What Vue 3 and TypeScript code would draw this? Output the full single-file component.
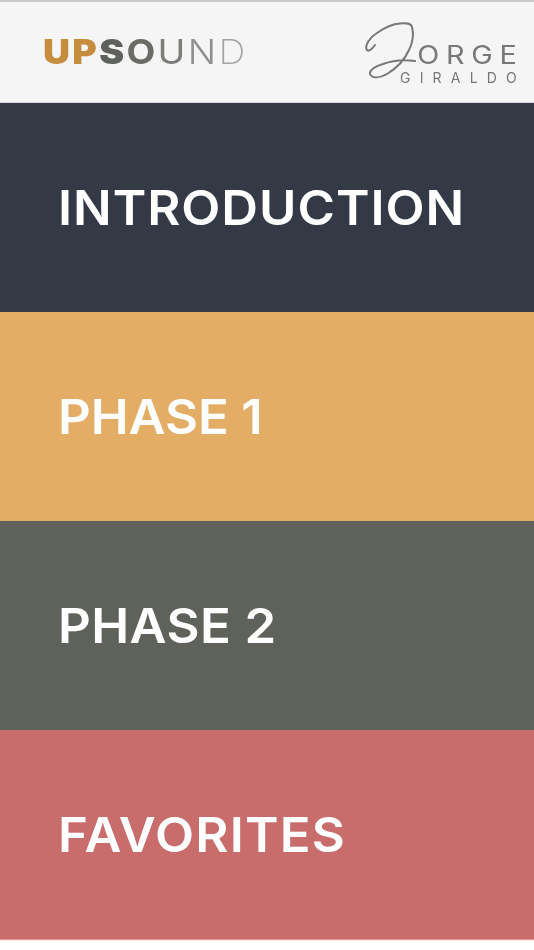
<script setup lang="ts">
interface Section { label: string; tone: string }
const sections: Section[] = [
  { label: 'INTRODUCTION', tone: 'intro' },
  { label: 'PHASE 1', tone: 'one' },
  { label: 'PHASE 2', tone: 'two' },
  { label: 'FAVORITES', tone: 'fav' },
]
</script>

<template>
  <div class="page">
    <header class="head">
      <div class="brand"><span class="up">UP</span><span class="s">S</span><span class="o">O</span><span class="u">U</span><span class="n">N</span><span class="d">D</span></div>
      <div class="sign">
        <svg class="swirl" viewBox="0 0 60 62" aria-hidden="true">
          <path d="M11 24 C8 28 5 31 3 29 C0 25 6 16 13 12 C20 7 28 3 36 2.5 C42 2 47 2 48 6 C50 14 48 23 45 29 C41 38 33 47 23 53 C16 57 8 58 6 53 C5 49 12 45 19 43 C27 40 38 38 51 40" />
        </svg>
        <div class="sign-top">ORGE</div>
        <div class="sign-bot">GIRALDO</div>
      </div>
    </header>
    <main class="list">
      <section v-for="s in sections" :key="s.label" class="row" :class="s.tone"><span class="label">{{ s.label }}</span></section>
    </main>
  </div>
</template>

<style>
html, body { margin: 0; background: #fff; }
</style>

<style scoped>
.page {
  width: 534px;
  height: 950px;
  display: flex;
  flex-direction: column;
  font-family: Inter, "Open Sans", sans-serif;
  background: #fff;
  overflow: hidden;
}
.head {
  height: 103px;
  box-sizing: border-box;
  border-top: 2px solid #c9c9c9;
  border-bottom: 1px solid #d4d4d6;
  background: #f5f5f5;
  display: flex;
  align-items: center;
  justify-content: space-between;
  padding: 0 14px 0 43px;
}
.brand {
  font-size: 34px;
  letter-spacing: 2.1px;
  line-height: 1;
  transform: scaleX(1.1);
  transform-origin: left center;
  filter: blur(0.5px);
}
.up { color: #c68d3f; font-weight: 900; }
.s { color: #5f625c; font-weight: 900; }
.o { color: #6a6c67; font-weight: 700; }
.u { color: #7b7d79; font-weight: 400; }
.n { color: #8d8f8c; font-weight: 300; }
.d { color: #a3a4a2; font-weight: 200; }
.sign {
  position: relative;
  width: 156px;
  height: 62px;
  color: #777;
  filter: blur(0.5px);
}
.swirl {
  position: absolute;
  left: 0;
  top: 0;
  width: 60px;
  height: 62px;
  fill: none;
  stroke: #777;
  stroke-width: 2;
  stroke-linecap: round;
}
.sign-top {
  position: absolute;
  right: -3px;
  top: 21px;
  font-size: 25px;
  font-weight: 400;
  letter-spacing: 5.9px;
  line-height: 1.1;
  transform: scaleX(1.15);
  transform-origin: right center;
}
.sign-bot {
  position: absolute;
  right: -6px;
  top: 49px;
  font-size: 14px;
  font-weight: 400;
  letter-spacing: 9.2px;
  line-height: 1.1;
}
.list {
  display: flex;
  flex-direction: column;
  box-shadow: 0 1px 0 #e79a9a, 0 2px 0 #fdeeee;
}
.row {
  height: 209px;
  box-sizing: border-box;
  padding: 0 0 0 58px;
  display: flex;
  align-items: center;
  color: #fff;
  font-size: 48px;
  font-weight: 560;
  line-height: 1;
}
.label {
  transform: scaleX(1.06);
  transform-origin: left center;
  filter: blur(0.3px);
}
.intro { background: #333a46; }
.intro .label { letter-spacing: 0.9px; }
.one { background: #e4ad66; }
.one .label { letter-spacing: -0.1px; }
.two { background: #5f625b; }
.two .label { letter-spacing: 0.4px; }
.fav { background: #c96c6c; }
.fav .label { letter-spacing: 1.1px; }
</style>
